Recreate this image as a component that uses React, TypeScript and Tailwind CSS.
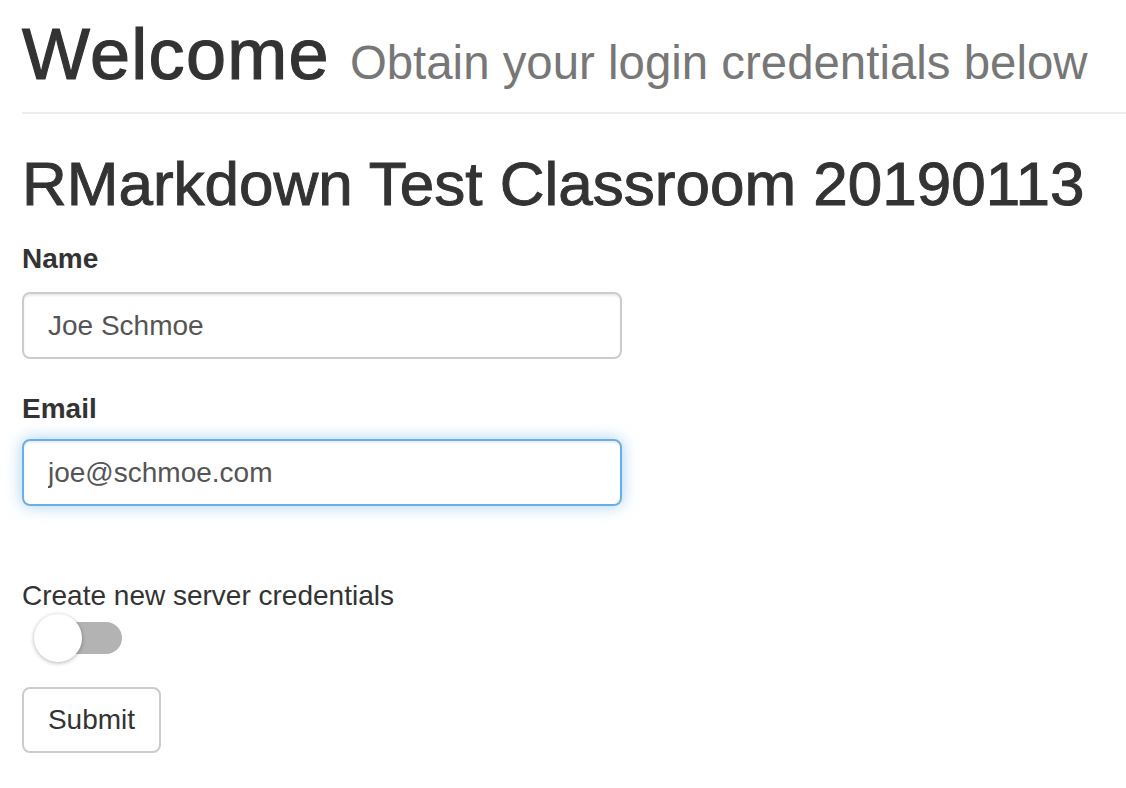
import React from "react";

export default function App() {
  return (
    <main className="min-h-screen bg-white pl-[22px] font-['Liberation_Sans',Arial,sans-serif] text-[#333]">
      <div className="pt-[15px] pb-[18px] border-b-2 border-[#eee]">
        <h1 className="text-[72px] leading-[79px] font-medium whitespace-nowrap">
          <span className="tracking-[1.3px] [-webkit-text-stroke:1.2px_#333]">Welcome</span>{" "}
          <small className="text-[47.4px] leading-none text-[#777] font-normal">Obtain your login credentials below</small>
        </h1>
      </div>

      <h2 className="mt-[36px] text-[62px] leading-[68px] font-medium whitespace-nowrap [-webkit-text-stroke:1px_#333]">
        RMarkdown Test Classroom 20190113
      </h2>

      <form className="mt-[21px]" onSubmit={(e) => e.preventDefault()}>
        <div className="mb-[30px]">
          <label className="block text-[28px] leading-[40px] font-bold mb-[13px]">Name</label>
          <input
            defaultValue="Joe Schmoe"
            className="block w-[600px] h-[67px] px-[24px] text-[28px] text-[#555] border-2 border-[#ccc] rounded-[8px] shadow-[inset_0_2px_2px_rgba(0,0,0,0.075)] outline-none"
          />
        </div>
        <div>
          <label className="block text-[28px] leading-[40px] font-bold mb-[10px]">Email</label>
          <input
            defaultValue="joe@schmoe.com"
            className="block w-[600px] h-[67px] px-[24px] text-[28px] text-[#555] border-2 border-[#66afe9] rounded-[8px] shadow-[inset_0_2px_2px_rgba(0,0,0,0.075),0_0_16px_rgba(102,175,233,0.6)] outline-none"
          />
        </div>

        <p className="mt-[71px] text-[28px] leading-[37px]">Create new server credentials</p>
        <div className="relative w-[100px] h-[48px] flex items-center">
          <div className="ml-[14px] w-[86px] h-[32px] rounded-full bg-[#b3b3b3]" />
          <div className="absolute left-[12px] top-0 w-[48px] h-[48px] rounded-full bg-white shadow-[0_1px_4px_rgba(0,0,0,0.3)]" />
        </div>

        <button
          type="submit"
          className="mt-[25px] w-[139px] h-[66px] text-[28px] text-[#333] bg-white border-2 border-[#ccc] rounded-[8px]"
        >
          Submit
        </button>
      </form>
    </main>
  );
}
